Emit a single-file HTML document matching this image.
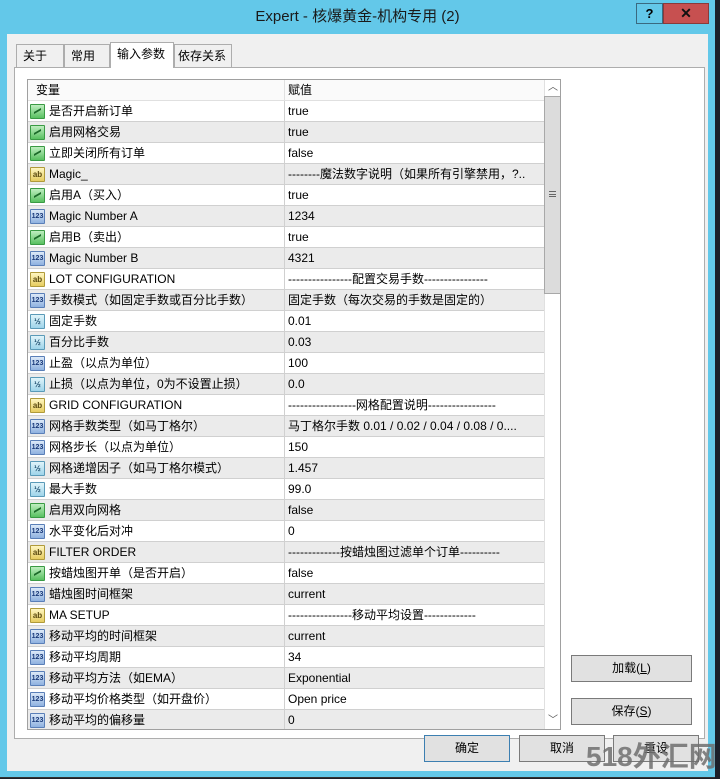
<!DOCTYPE html>
<html style="width:720px;height:779px;overflow:hidden"><head><meta charset="utf-8"><style>
*{box-sizing:border-box;margin:0;padding:0}
body{width:720px;height:779px;overflow:hidden;background:#1b1f29;font-family:"Liberation Sans","Noto Sans CJK SC",sans-serif;font-size:12px;line-height:15px;color:#000;position:relative}
.win{position:absolute;left:0;top:0;width:715px;height:778px;background:#63c8e9;border-bottom:1px solid #333;overflow:hidden}
.title{position:absolute;left:0;top:7px;width:715px;text-align:center;font-size:15px;line-height:20px;color:#1a1a1a;white-space:nowrap}
.qb{position:absolute;left:636px;top:3px;width:27px;height:21px;border:1px solid #3a6a80;font-weight:bold;text-align:center;font-size:13px;line-height:19px}
.xb{position:absolute;left:663px;top:3px;width:46px;height:21px;background:#c75050;border:1px solid #8a3a3a;color:#111;font-weight:bold;text-align:center;font-size:14px;line-height:19px}
.client{position:absolute;left:7px;top:34px;width:701px;height:737px;background:#f0f0f0}
.tab{position:absolute;top:44px;height:23px;border:1px solid #adadad;border-bottom:none;background:#f0f0f0;line-height:22px;padding-left:6px;font-size:12px;white-space:nowrap}
.panel{position:absolute;left:14px;top:67px;width:691px;height:672px;background:#fff;border:1px solid #adadad}
.grid{position:absolute;left:27px;top:79px;width:534px;height:651px;border:1px solid #a0a0a0;background:#fff;overflow:hidden}
.hdr{position:absolute;left:0;top:0;width:516px;height:21px;background:#fafafa;border-bottom:1px solid #e0e0e0}
.hdr span{position:absolute;top:3px;line-height:15px}
.row{position:absolute;left:0;width:516px;height:21px;border-bottom:1px solid #d0d0d0}
.row.g{background:#ebebeb}
.row .n{position:absolute;left:21px;top:3px;height:15px;line-height:15px;white-space:nowrap}
.row .v{position:absolute;left:260px;top:3px;height:15px;line-height:15px;white-space:nowrap}
.row .sep{position:absolute;left:256px;top:0;width:1px;height:21px;background:#d0d0d0}
.ic{position:absolute;left:2px;top:3px;width:15px;height:15px;border-radius:1px;font-size:8px;line-height:14px;text-align:center;font-weight:bold}
.b{background:linear-gradient(#bfeec0,#58c060);border:1px solid #3a9a44}
.b::after{content:"";position:absolute;left:3px;top:5px;width:7px;height:4px;border-top:2px solid #1d6a2a;transform:skewY(-30deg)}
.s{background:linear-gradient(#fff6c0,#e6cc60);border:1px solid #b09a3a;color:#5a4a10}
.i{background:linear-gradient(#dce9f8,#8fb2e0);border:1px solid #5a7fb8;color:#1a3a7a;font-size:7px}
.d{background:linear-gradient(#e0f4fa,#9fd4ea);border:1px solid #5a9ab8;color:#1a4a6a;font-size:8px}
.sb{position:absolute;left:516px;top:0;width:17px;height:650px;background:#fff;border-left:1px solid #e0e0e0}
.thumb{position:absolute;left:516px;top:16px;width:17px;height:198px;background:#dcdcdc;border:1px solid #a8a8a8}
.btn{position:absolute;height:27px;border:1px solid #7a7a7a;background:#e1e1e1;text-align:center;line-height:25px;font-size:12px;white-space:nowrap}
</style></head><body>
<div class="win">
<div class="title">Expert - 核爆黄金-机构专用 (2)</div>
<div class="qb">?</div><div class="xb">✕</div>
<div class="client"></div>
<div class="tab" style="left:16px;width:48px">关于</div>
<div class="tab" style="left:64px;width:46px">常用</div>
<div class="tab" style="left:110px;top:42px;height:26px;width:64px;background:#fff;z-index:2">输入参数</div>
<div class="tab" style="left:174px;width:58px;padding-left:3px">依存关系</div>
<div class="panel"></div>
<div class="grid">
<div class="hdr"><span style="left:8px">变量</span><span style="left:260px">赋值</span><div style="position:absolute;left:256px;top:0;width:1px;height:21px;background:#e0e0e0"></div></div>
<div class="sb"></div>
<div style="position:absolute;left:517px;top:0;width:16px;height:16px;text-align:center;font-size:10px;color:#555;line-height:16px">︿</div>
<div class="thumb"><div style="position:absolute;left:4px;top:94px;width:7px;height:6px;border-top:1px solid #666;border-bottom:1px solid #666"><div style="margin-top:2px;border-top:1px solid #666"></div></div></div>
<div style="position:absolute;left:517px;top:633px;width:16px;height:16px;text-align:center;font-size:10px;color:#555;line-height:16px">﹀</div>
<div id="rows"></div>
</div>
<div class="btn" style="left:571px;top:655px;width:121px">加载(<u>L</u>)</div>
<div class="btn" style="left:571px;top:698px;width:121px">保存(<u>S</u>)</div>
<div class="btn" style="left:424px;top:735px;width:86px;border-color:#3c7fb1">确定</div>
<div class="btn" style="left:519px;top:735px;width:86px">取消</div>
<div class="btn" style="left:613px;top:735px;width:86px">重设</div>
<div style="position:absolute;left:586px;top:739px;font-size:28px;line-height:36px;font-weight:bold;color:rgba(110,110,110,0.85);white-space:nowrap">518外汇网</div>
</div>
<script>
var R=[["b","是否开启新订单","true"],["b","启用网格交易","true"],["b","立即关闭所有订单","false"],["s","Magic_","--------魔法数字说明（如果所有引擎禁用，?.."],["b","启用A（买入）","true"],["i","Magic Number  A","1234"],["b","启用B（卖出）","true"],["i","Magic Number  B","4321"],["s","LOT CONFIGURATION","----------------配置交易手数----------------"],["i","手数模式（如固定手数或百分比手数）","固定手数（每次交易的手数是固定的）"],["d","固定手数","0.01"],["d","百分比手数","0.03"],["i","止盈（以点为单位）","100"],["d","止损（以点为单位，0为不设置止损）","0.0"],["s","GRID CONFIGURATION","-----------------网格配置说明-----------------"],["i","网格手数类型（如马丁格尔）","马丁格尔手数  0.01 / 0.02 / 0.04 / 0.08 / 0...."],["i","网格步长（以点为单位）","150"],["d","网格递增因子（如马丁格尔模式）","1.457"],["d","最大手数","99.0"],["b","启用双向网格","false"],["i","水平变化后对冲","0"],["s","FILTER ORDER","-------------按蜡烛图过滤单个订单----------"],["b","按蜡烛图开单（是否开启）","false"],["i","蜡烛图时间框架","current"],["s","MA SETUP","----------------移动平均设置-------------"],["i","移动平均的时间框架","current"],["i","移动平均周期","34"],["i","移动平均方法（如EMA）","Exponential"],["i","移动平均价格类型（如开盘价）","Open price"],["i","移动平均的偏移量","0"]];
var L={b:"",s:"ab",i:"123",d:"½"},h="";
R.forEach(function(r,k){h+='<div class="row'+(k%2?' g':'')+'" style="top:'+(21+k*21)+'px"><div class="ic '+r[0]+'">'+L[r[0]]+'</div><span class="n">'+r[1]+'</span><div class="sep"></div><span class="v">'+r[2]+'</span></div>';});
document.getElementById("rows").innerHTML=h;
</script>
</body></html>
